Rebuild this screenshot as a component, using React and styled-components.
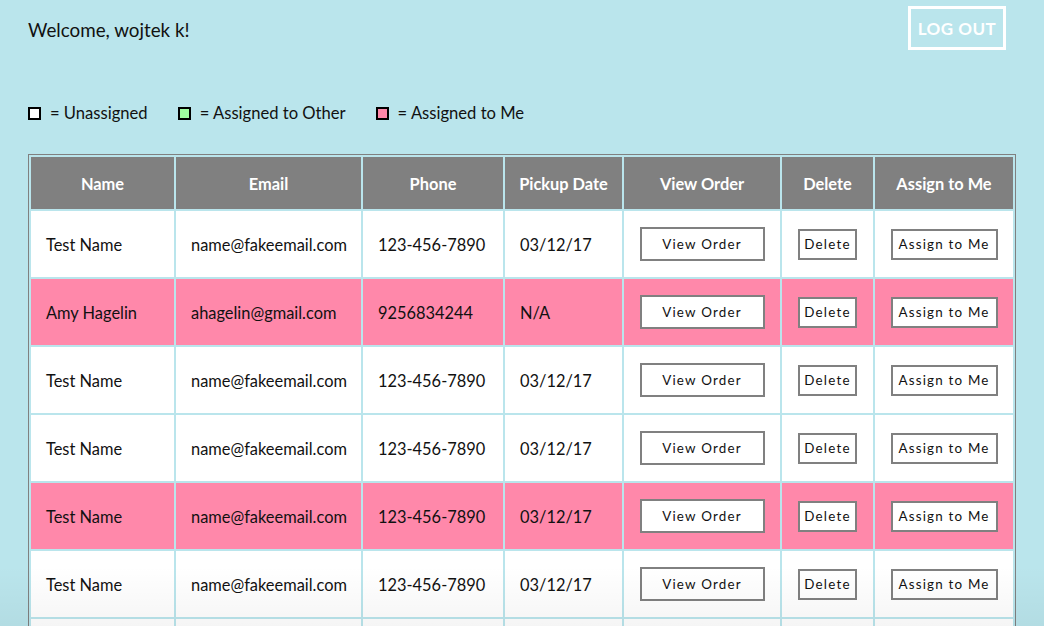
import React from 'react';
import styled, { createGlobalStyle } from 'styled-components';

const GlobalStyle = createGlobalStyle`
    body {
        margin: 0;
        background: #bae5ec;
        font-family: Lato, "Noto Sans", sans-serif;
        color: #111;
    }
`;

const Page = styled.div`
    padding: 6px 0 0 28px;
    position: relative;
    height: 626px;
    overflow: hidden;
    box-sizing: border-box;
`;
const TopBar = styled.div`
    display: flex;
    justify-content: space-between;
    align-items: flex-start;
    padding-right: 38px;
`;
const Welcome = styled.div`
    font-size: 18.8px;
    margin-top: 12px;
`;
const LogOut = styled.button`
    width: 98px;
    height: 44px;
    background: transparent;
    border: 3px solid #fff;
    color: #fff;
    font-family: Lato, "Noto Sans", sans-serif;
    font-weight: 700;
    font-size: 17px;
    letter-spacing: 0.5px;
    padding: 0;
    cursor: pointer;
`;
const Legend = styled.div`
    display: flex;
    align-items: center;
    margin-top: 53px;
    font-size: 16.6px;
`;
const LegendItem = styled.div`
    display: flex;
    align-items: center;
    gap: 9px;
    margin-right: 30px;
`;
const Swatch = styled.span`
    width: 9px;
    height: 9px;
    border: 2px solid #000;
    background: ${p => p.color};
`;
const Table = styled.table`
    margin-top: 31px;
    width: 988px;
    table-layout: fixed;
    border: 1px solid #808080;
    border-collapse: separate;
    border-spacing: 2px;
    background: #bae5ec;
    font-size: 16.4px;
`;
const Th = styled.th`
    background: #808080;
    color: #fff;
    height: 52px;
    padding: 0;
    font-weight: 700;
    font-size: 16.4px;
    width: ${p => p.w}px;
`;
const Td = styled.td`
    background: ${p => (p.mine ? '#ff88aa' : '#fff')};
    height: 66px;
    padding: ${p => (p.center ? '0' : '0 0 0 15px')};
    text-align: ${p => (p.center ? 'center' : 'left')};
    white-space: nowrap;
`;
const ActionButton = styled.button`
    background: #fff;
    border: 2px solid #808080;
    font-family: Lato, "Noto Sans", sans-serif;
    font-size: 13.4px;
    letter-spacing: 1.2px;
    color: #111;
    height: ${p => (p.wide ? 34 : 31)}px;
    width: ${p => p.w}px;
    padding: 0;
    cursor: pointer;
    vertical-align: middle;
`;
const Fade = styled.div`
    position: absolute;
    left: 0;
    right: 0;
    bottom: 0;
    height: 60px;
    background: linear-gradient(rgba(0,0,0,0), rgba(0,0,0,0.04));
    pointer-events: none;
`;

const columns = [
    { title: 'Name', w: 143 },
    { title: 'Email', w: 185 },
    { title: 'Phone', w: 140 },
    { title: 'Pickup Date', w: 117 },
    { title: 'View Order', w: 156 },
    { title: 'Delete', w: 91 },
    { title: 'Assign to Me', w: 138 },
];

const test = { name: 'Test Name', email: 'name@fakeemail.com', phone: '123-456-7890', date: '03/12/17' };
const orders = [
    { ...test },
    { name: 'Amy Hagelin', email: 'ahagelin@gmail.com', phone: '9256834244', date: 'N/A', mine: true },
    { ...test },
    { ...test },
    { ...test, mine: true },
    { ...test },
    { ...test },
];

const App = () => {
    return (
        <Page>
            <GlobalStyle />
            <TopBar>
                <Welcome>Welcome, wojtek k!</Welcome>
                <LogOut>LOG OUT</LogOut>
            </TopBar>
            <Legend>
                <LegendItem><Swatch color="#fff" />= Unassigned</LegendItem>
                <LegendItem><Swatch color="#a0ffa0" />= Assigned to Other</LegendItem>
                <LegendItem><Swatch color="#ff88aa" />= Assigned to Me</LegendItem>
            </Legend>
            <Table>
                <thead>
                    <tr>
                        {columns.map((c) => <Th key={c.title} w={c.w}>{c.title}</Th>)}
                    </tr>
                </thead>
                <tbody>
                    {orders.map((o, i) => (
                        <tr key={i}>
                            <Td mine={o.mine}>{o.name}</Td>
                            <Td mine={o.mine}>{o.email}</Td>
                            <Td mine={o.mine}>{o.phone}</Td>
                            <Td mine={o.mine}>{o.date}</Td>
                            <Td mine={o.mine} center><ActionButton wide w={125}>View Order</ActionButton></Td>
                            <Td mine={o.mine} center><ActionButton w={59}>Delete</ActionButton></Td>
                            <Td mine={o.mine} center><ActionButton w={107}>Assign to Me</ActionButton></Td>
                        </tr>
                    ))}
                </tbody>
            </Table>
            <Fade />
        </Page>
    );
};

export default App;
